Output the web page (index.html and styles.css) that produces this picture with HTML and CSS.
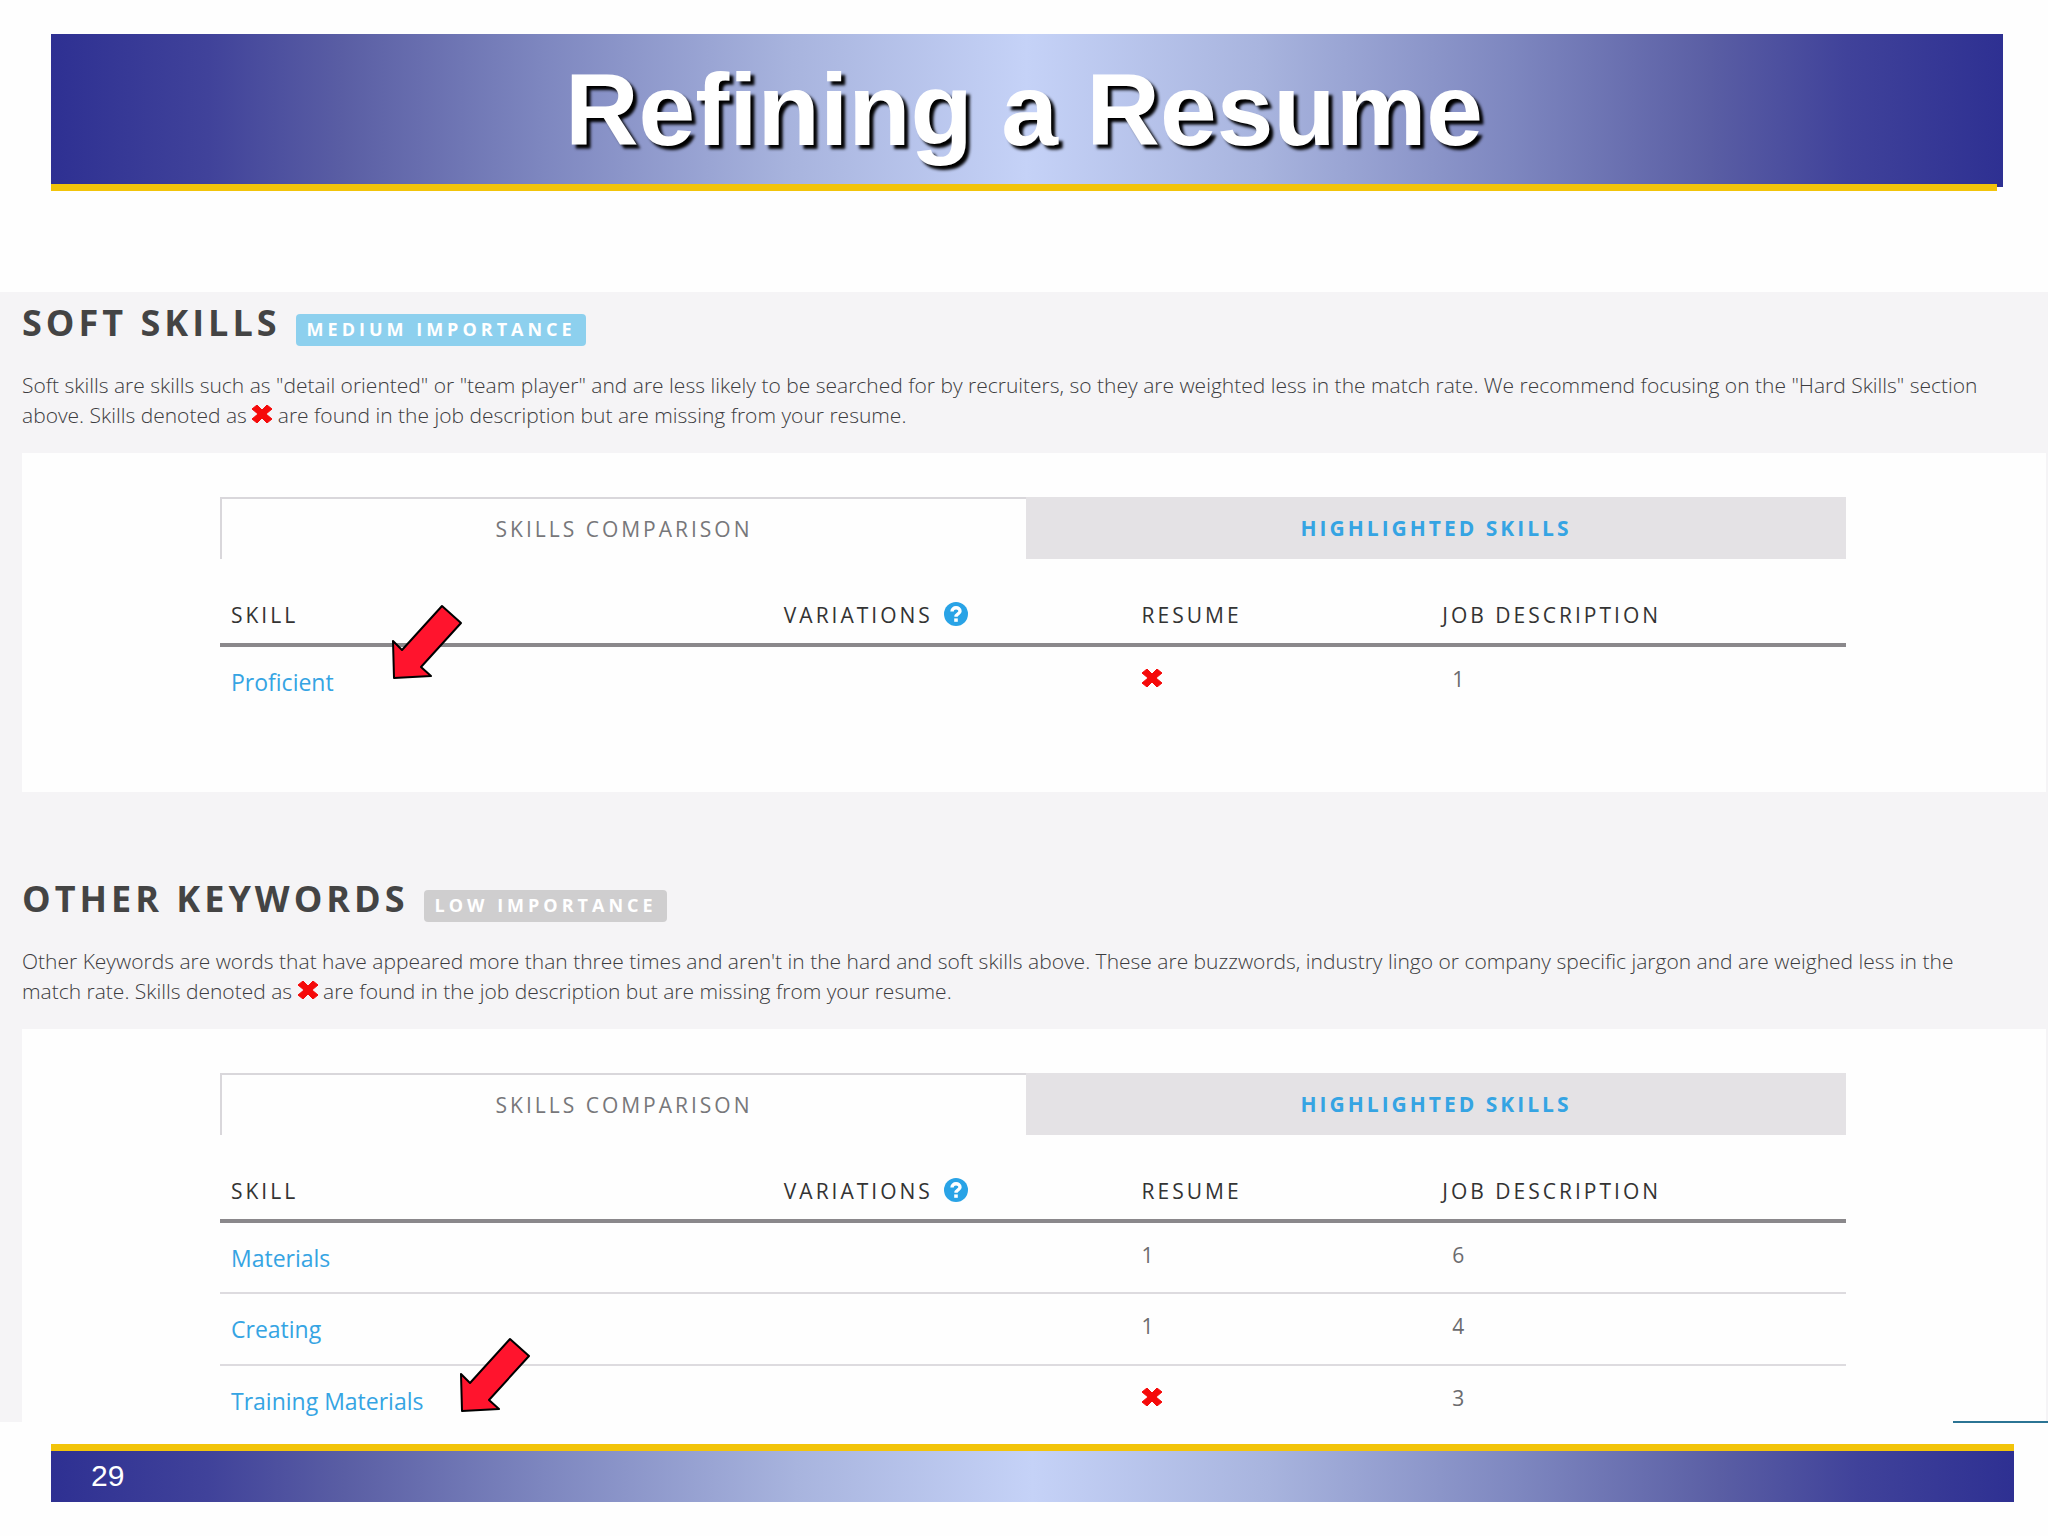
FILE: index.html
```
<!DOCTYPE html>
<html lang="en">
<head>
  <meta charset="UTF-8">
  <title>Refining a Resume</title>
  <meta name="viewport" content="width=device-width, initial-scale=1.0">
  <link rel="stylesheet" href="styles.css">
</head>
<body>

  <!-- shared icons -->
  <svg class="sprite" aria-hidden="true">
    <symbol id="cross" viewBox="0 0 20 18">
      <path d="M5 0 L10 5 L15 0 L20 4 L14 9 L20 14 L15 18 L10 13 L5 18 L0 14 L6 9 L0 4 Z" fill="#f50a0a" stroke="#f50a0a" stroke-linejoin="round"/>
    </symbol>
    <symbol id="help" viewBox="0 0 24 24">
      <circle cx="12" cy="12" r="12" fill="#29a3e6"/>
      <path d="M8 9.5 C8 4.5 16 4.5 16 9.2 C16 12 12 11.8 12 14.8" fill="none" stroke="#fff" stroke-width="3.4"/>
      <rect x="10.2" y="16.4" width="3.6" height="3.4" fill="#fff"/>
    </symbol>
    <symbol id="arrow" viewBox="0 0 72 76">
      <path d="M51 2 L70 19 L30 63 L40 72 L3 74 L2 37 L11 46 Z" fill="#ff142d" stroke="#000" stroke-width="2" stroke-linejoin="round"/>
    </symbol>
  </svg>

  <header class="banner">
    <h1>Refining a Resume</h1>
  </header>

  <main class="report">
    <section class="section">
      <div class="heading">
        <h2>Soft Skills</h2>
        <span class="badge medium">Medium Importance</span>
      </div>
      <p>Soft skills are skills such as "detail oriented" or "team player" and are less likely to be searched for by recruiters, so they are weighted less in the match rate. We recommend focusing on the "Hard Skills" section<br>above. Skills denoted as <svg class="cross" role="img" aria-label="missing"><use href="#cross"/></svg> are found in the job description but are missing from your resume.</p>
      <div class="card">
        <div class="tabs" role="tablist">
          <button class="tab active" role="tab" aria-selected="true">Skills Comparison</button>
          <button class="tab" role="tab" aria-selected="false">Highlighted Skills</button>
        </div>
        <table>
          <thead>
            <tr>
              <th class="col-skill">Skill</th>
              <th class="col-variations">Variations <svg class="help" role="img" aria-label="help"><use href="#help"/></svg></th>
              <th class="col-resume">Resume</th>
              <th>Job Description</th>
            </tr>
          </thead>
          <tbody>
            <tr>
              <td class="skill"><a href="#">Proficient</a><svg class="arrow" aria-hidden="true"><use href="#arrow"/></svg></td>
              <td></td>
              <td><svg class="cross" role="img" aria-label="missing"><use href="#cross"/></svg></td>
              <td class="count">1</td>
            </tr>
          </tbody>
        </table>
      </div>
    </section>

    <section class="section">
      <div class="heading">
        <h2>Other Keywords</h2>
        <span class="badge low">Low Importance</span>
      </div>
      <p>Other Keywords are words that have appeared more than three times and aren't in the hard and soft skills above. These are buzzwords, industry lingo or company specific jargon and are weighed less in the<br>match rate. Skills denoted as <svg class="cross" role="img" aria-label="missing"><use href="#cross"/></svg> are found in the job description but are missing from your resume.</p>
      <div class="card last">
        <div class="tabs" role="tablist">
          <button class="tab active" role="tab" aria-selected="true">Skills Comparison</button>
          <button class="tab" role="tab" aria-selected="false">Highlighted Skills</button>
        </div>
        <table>
          <thead>
            <tr>
              <th class="col-skill">Skill</th>
              <th class="col-variations">Variations <svg class="help" role="img" aria-label="help"><use href="#help"/></svg></th>
              <th class="col-resume">Resume</th>
              <th>Job Description</th>
            </tr>
          </thead>
          <tbody>
            <tr>
              <td class="skill"><a href="#">Materials</a></td>
              <td></td>
              <td>1</td>
              <td class="count">6</td>
            </tr>
            <tr>
              <td class="skill"><a href="#">Creating</a></td>
              <td></td>
              <td>1</td>
              <td class="count">4</td>
            </tr>
            <tr>
              <td class="skill"><a href="#">Training Materials</a><svg class="arrow" aria-hidden="true"><use href="#arrow"/></svg></td>
              <td></td>
              <td><svg class="cross" role="img" aria-label="missing"><use href="#cross"/></svg></td>
              <td class="count">3</td>
            </tr>
          </tbody>
        </table>
      </div>
    </section>
    <div class="corner-line"></div>
  </main>

  <footer class="footer">29</footer>

</body>
</html>
```

FILE: styles.css
```
* { box-sizing: border-box; margin: 0; padding: 0; }
body {
  background: #fefefe;
  font-family: "Open Sans", "Noto Sans", sans-serif;
  color: #6b6b6e;
}
.sprite { display: none; }

.banner, .footer {
  background: linear-gradient(to right, #2e3092, #40429a 8%, #5a5ea4 15%, #7d86bf 25%, #a8b4de 38%, #c5d2f7 50%, #a8b4de 62%, #7d86bf 75%, #5a5ea4 85%, #40429a 92%, #2e3092);
}
.banner {
  position: relative;
  height: 153px;
  margin: 34px 45px 105px 51px;
}
.banner::after {
  content: "";
  position: absolute;
  left: 0;
  right: 6px;
  bottom: -4px;
  height: 7px;
  background: #f2c40a;
}
h1 {
  padding-right: 6px;
  font-family: "Liberation Sans", Arial, sans-serif;
  font-size: 102px;
  line-height: 153px;
  text-align: center;
  color: #fff;
  text-shadow: 4px 4px 3px #000;
}

.report {
  position: relative;
  padding: 12px 2px 0 22px;
  background: #f5f4f6;
}
.heading {
  display: flex;
  align-items: flex-end;
  gap: 15px;
  height: 42px;
}
h2 {
  padding-bottom: 3px;
  font-size: 36px;
  line-height: 40px;
  letter-spacing: 4px;
  text-transform: uppercase;
  color: #444;
}
.badge {
  padding: 0 10px 2px 11px;
  border-radius: 4px;
  font-size: 18px;
  font-weight: 700;
  line-height: 30px;
  letter-spacing: 4px;
  text-transform: uppercase;
  color: #fff;
}
.medium { background: #8dd0ee; }
.low { background: #cfcecf; }
.section p {
  padding: 24px 0 23px;
  font-size: 21px;
  font-weight: 300;
  line-height: 30px;
  color: #3c3c40;
}
.cross { width: 20px; height: 18px; }

.card {
  margin-bottom: 88px;
  padding: 44px 200px 75px 198px;
  background: #fefefe;
}
.card.last { margin-bottom: 0; padding-bottom: 0; }
.tabs { display: flex; }
.tab {
  flex: 821;
  height: 62px;
  border: 0;
  background: #e4e2e5;
  font: 700 21px "Open Sans", sans-serif;
  letter-spacing: 3px;
  text-transform: uppercase;
  color: #35a4e3;
}
.tab.active {
  flex: 805;
  border: solid #d9d7db;
  border-width: 2px 0 0 2px;
  background: #fefefe;
  font-weight: 400;
  color: #77777a;
}

table {
  width: 100%;
  table-layout: fixed;
  border-collapse: collapse;
}
th {
  height: 86px;
  padding: 28px 0 0 11px;
  border-bottom: 4px solid #8a888b;
  font-size: 21px;
  font-weight: 400;
  letter-spacing: 3px;
  text-align: left;
  text-transform: uppercase;
  color: #333;
}
.col-skill { width: 34%; }
.col-variations { width: 22%; }
.col-resume { width: 18.5%; }
.help { width: 24px; height: 24px; margin-left: 3px; vertical-align: -3px; }
td {
  height: 72px;
  padding: 17px 0 0 11px;
  border-bottom: 2px solid #dddbdf;
  font-size: 21px;
  line-height: 30px;
  vertical-align: top;
}
tr:last-child td { border-bottom: 0; }
.last tr:last-child td { height: 57px; }
td.count { padding-left: 21px; }
td.skill {
  position: relative;
  padding-top: 20px;
  font-size: 23px;
}
td a { color: #35a4e3; text-decoration: none; }
.arrow {
  position: absolute;
  left: 171px;
  top: -43px;
  width: 72px;
  height: 76px;
}
.last .arrow { left: 239px; top: -29px; }
.corner-line {
  position: absolute;
  right: 0;
  bottom: -1px;
  width: 95px;
  height: 2px;
  background: #2b7494;
}

.footer {
  height: 58px;
  margin: 22px 34px 34px 51px;
  padding-left: 40px;
  border-top: 7px solid #f2c40a;
  font: 30px/50px "Liberation Sans", Arial, sans-serif;
  color: #fff;
}
```
